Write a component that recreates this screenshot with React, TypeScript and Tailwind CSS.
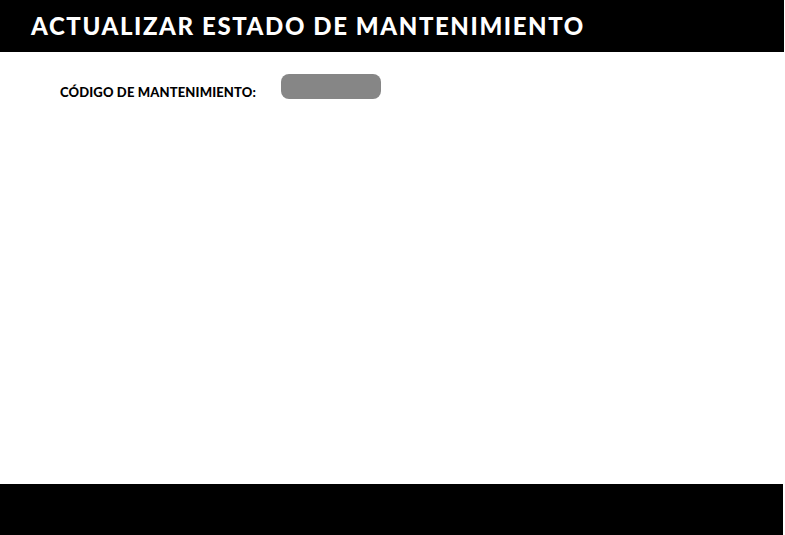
export default function App() {
  return (
    <div className="w-[785px] h-[535px] bg-white flex flex-col relative overflow-hidden" style={{ fontFamily: "Lato, 'Open Sans', sans-serif" }}>
      <div className="w-[784px] h-[52px] bg-black flex items-center pl-[31px] shrink-0">
        <h1 className="text-white font-black text-[24px] leading-none tracking-[1.6px]">ACTUALIZAR ESTADO DE MANTENIMIENTO</h1>
      </div>
      <div className="flex items-start pl-[60px] pt-[22px]">
        <span className="text-black font-black text-[13px] leading-none tracking-[0.15px] w-[221px] mt-[12px]">CÓDIGO DE MANTENIMIENTO:</span>
        <div className="w-[100px] h-[25px] rounded-[8px] bg-[#868686]" />
      </div>
      <div className="flex-1" />
      <div className="w-[783px] h-[51px] bg-black shrink-0" />
    </div>
  );
}
